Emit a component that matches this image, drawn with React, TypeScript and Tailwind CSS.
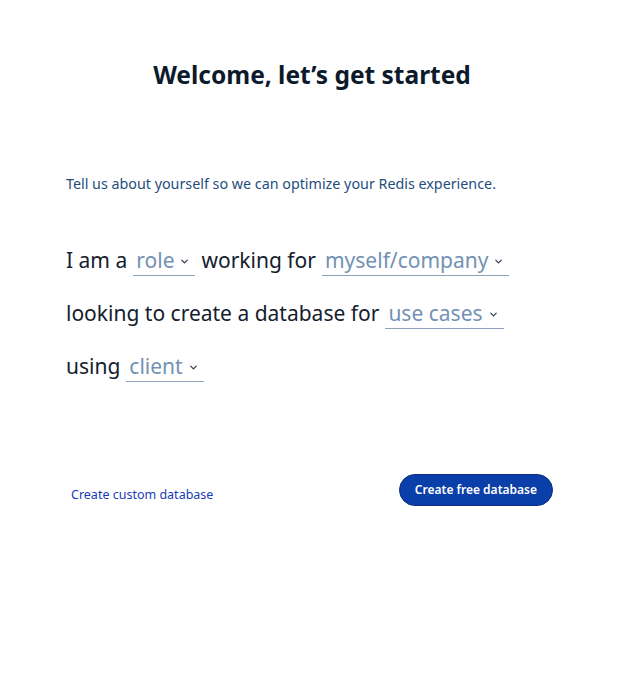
import { ChevronDown } from "lucide-react";

function Choice({ label }: { label: string }) {
  return (
    <button className="inline-flex items-center gap-[5px] border-b border-[#8da2ba] pl-[3px] pr-[5px] pb-[1px] mx-[6px] text-[#7391b3] leading-[28px]">
      <span>{label}</span>
      <ChevronDown size={11} strokeWidth={2.5} className="text-[#243447] mt-[3px]" />
    </button>
  );
}

export default function App() {
  return (
    <div
      className="w-[624px] h-[699px] bg-white"
      style={{ fontFamily: '"Noto Sans", "Open Sans", sans-serif' }}
    >
      <div className="pt-[58px] px-[66px]">
        <h1 className="text-center text-[24.5px] font-bold text-[#0c1a2c] leading-[34px]">
          Welcome, let’s get started
        </h1>

        <p className="mt-[82px] text-[14.3px] text-[#1f4e7d] leading-[20px]">
          Tell us about yourself so we can optimize your Redis experience.
        </p>

        <div className="mt-[40px] text-[21px] text-[#14202e] leading-[53px]">
          <div className="flex items-center">
            I am a<Choice label="role" />working for<Choice label="myself/company" />
          </div>
          <div className="flex items-center">
            looking to create a database for<Choice label="use cases" />
          </div>
          <div className="flex items-center">
            using<Choice label="client" />
          </div>
        </div>

        <div className="mt-[81px] flex items-center justify-between pr-[5px]">
          <a className="ml-[5px] mt-[10px] text-[12.5px] text-[#1a3cb8]">Create custom database</a>
          <button className="h-[32px] px-[15px] rounded-full bg-[#0a3ea8] border border-[#0b2c80] text-white text-[12px] font-semibold">
            Create free database
          </button>
        </div>
      </div>
    </div>
  );
}
